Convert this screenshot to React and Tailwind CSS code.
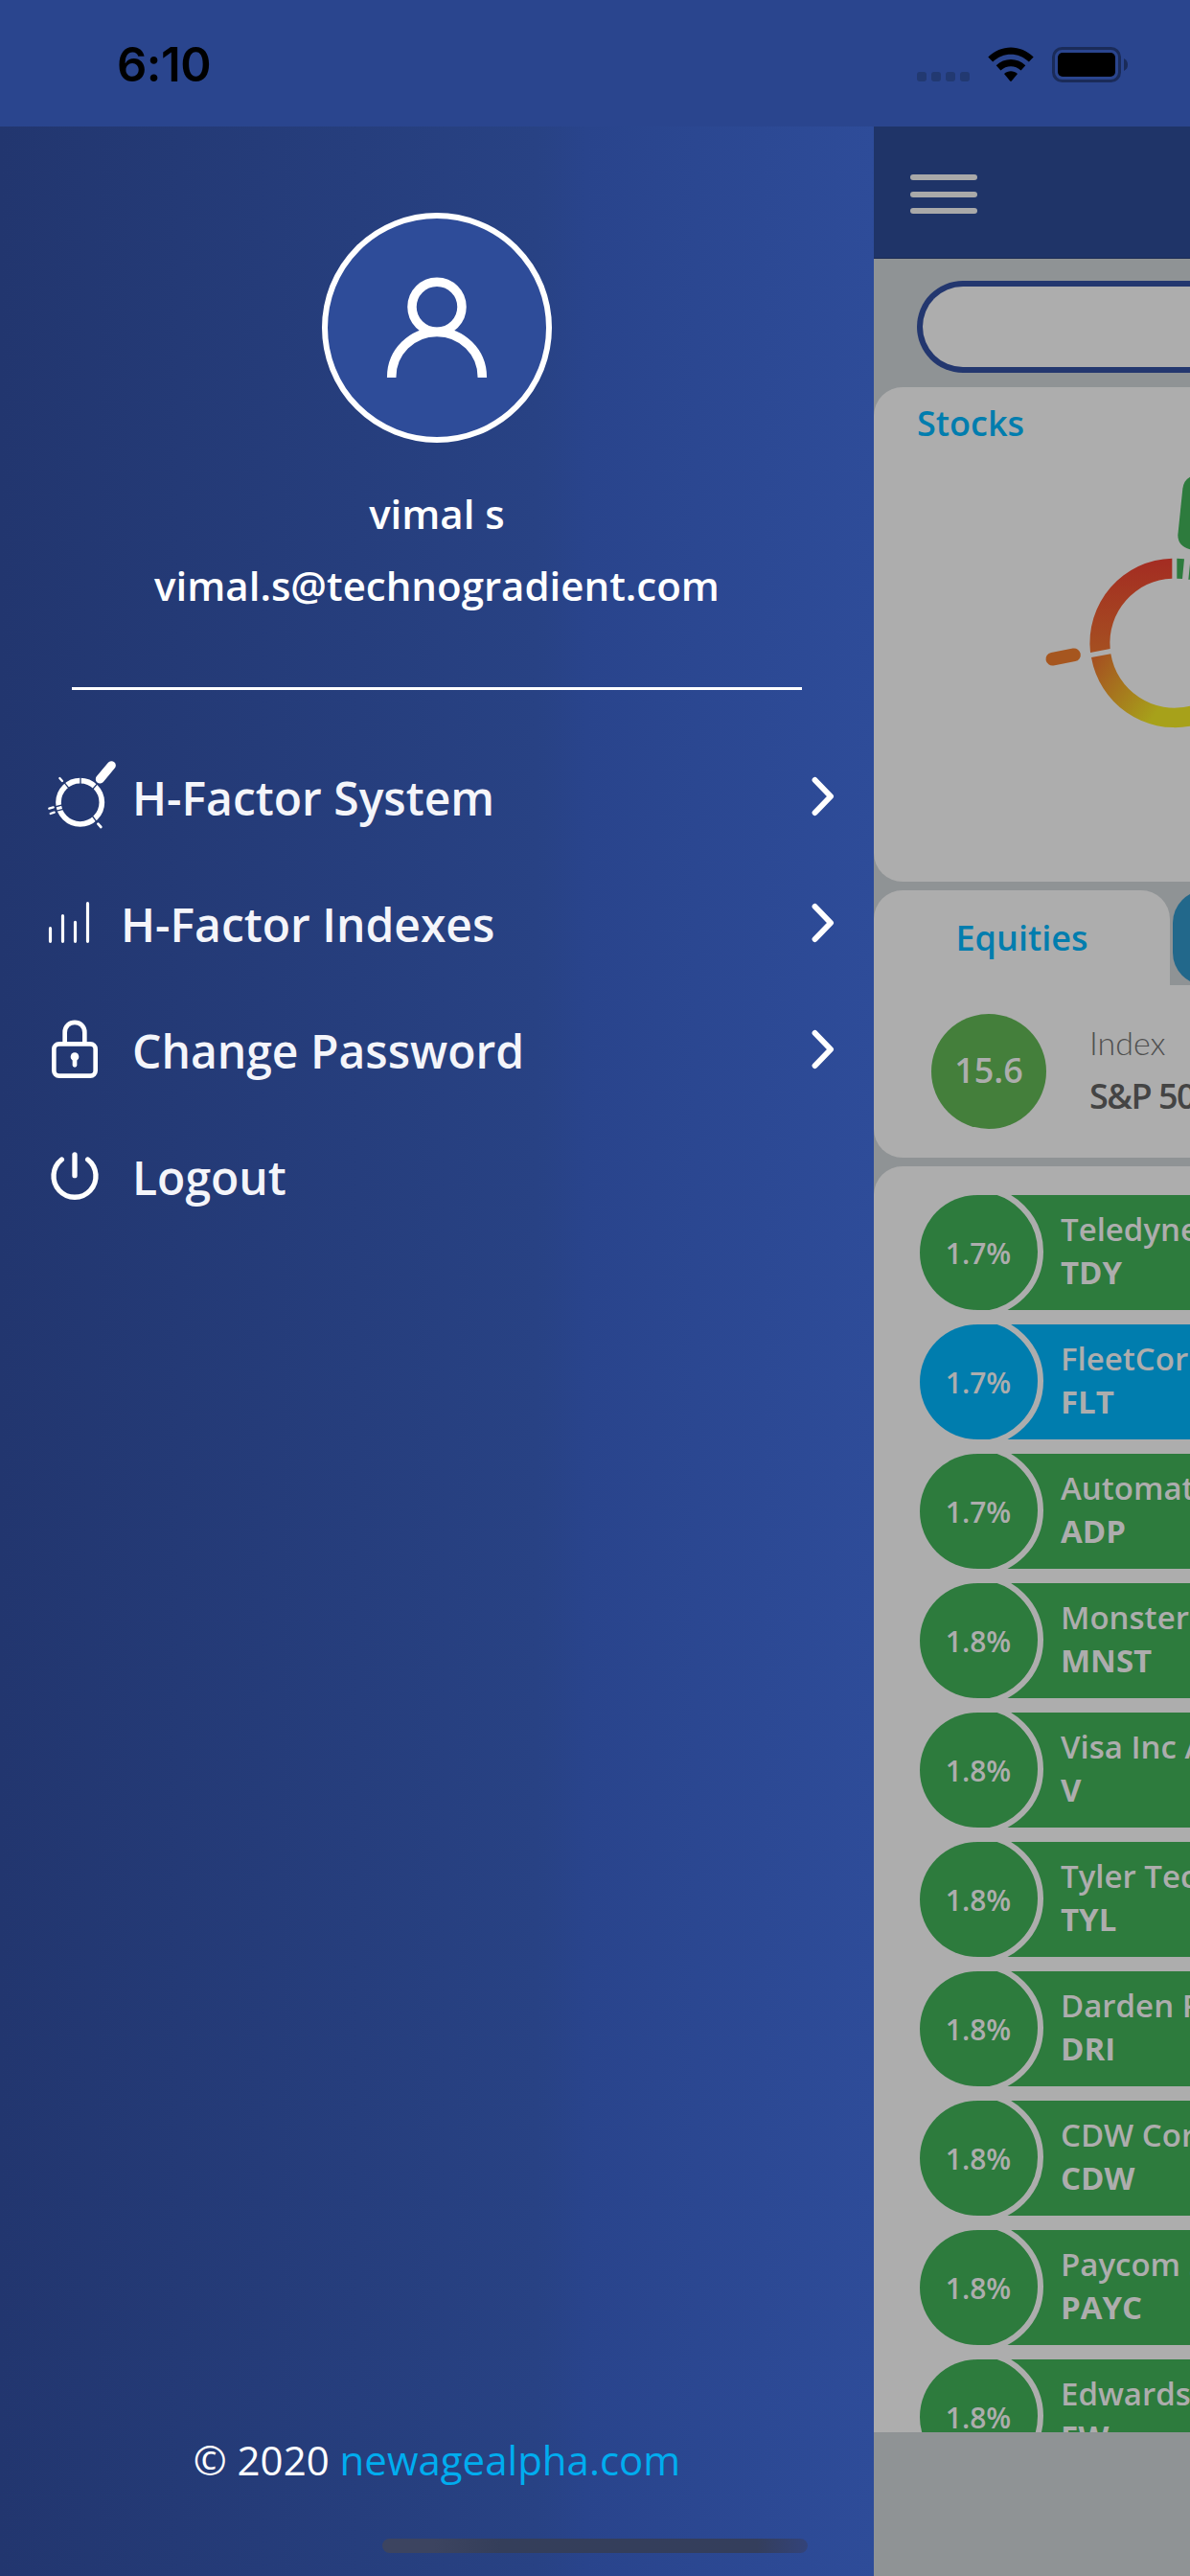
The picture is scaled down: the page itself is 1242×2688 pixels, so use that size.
const holdings = [
  { pct: "1.7%", name: "Teledyne Tech", ticker: "TDY" },
  { pct: "1.7%", name: "FleetCor Tech", ticker: "FLT", blue: true },
  { pct: "1.7%", name: "Automatic Data", ticker: "ADP" },
  { pct: "1.8%", name: "Monster Bev", ticker: "MNST" },
  { pct: "1.8%", name: "Visa Inc A", ticker: "V" },
  { pct: "1.8%", name: "Tyler Tech", ticker: "TYL" },
  { pct: "1.8%", name: "Darden Rest", ticker: "DRI" },
  { pct: "1.8%", name: "CDW Corp", ticker: "CDW" },
  { pct: "1.8%", name: "Paycom Soft", ticker: "PAYC" },
  { pct: "1.8%", name: "Edwards Life", ticker: "EW" },
];

function StatusBar() {
  return (
    <header className="flex h-[132px] shrink-0 items-start justify-between bg-[#2a458e] pl-[122px] pr-[64px] text-black">
      <span className="mt-[38px] font-['Inter'] text-[49px] font-semibold leading-[60px] tracking-[-0.5px]">6:10</span>
      <div className="mt-[48px] flex h-[38px] items-start">
        <div className="mr-[18px] mt-[27px] flex gap-[5px]">
          {[0, 1, 2, 3].map((i) => (
            <span key={i} className="h-[10px] w-[10px] rounded-[3px] bg-[#223971]" />
          ))}
        </div>
        <svg className="mr-[18px]" width="50" height="38" viewBox="0 0 50 38">
          <path d="M1.3 11.5C14.5 -2 35.500 -2 48.700 11.500L43.800 16.600C33.200 6 16.800 6 6.200 16.600Z" fill="black" />
          <path d="M9.700 20.200C18.300 11.800 31.700 11.800 40.300 20.200L35.600 25.600C29.500 19.800 20.500 19.800 14.400 25.600Z" fill="black" />
          <path d="M18 29C22 25.300 28 25.300 32 29L25.800 36.600Q25 37.500 24.200 36.600Z" fill="black" />
        </svg>
        <svg width="80" height="38" viewBox="0 0 80 38">
          <rect x="1.500" y="2.500" width="69" height="34" rx="9" fill="none" stroke="#1a2b59" strokeWidth="3" />
          <rect x="6" y="7" width="60" height="25" rx="5" fill="black" />
          <path d="M75 13Q79 15 79 19.500T75 26Z" fill="#1a2b59" />
        </svg>
      </div>
    </header>
  );
}

function PersonIcon() {
  return (
    <svg width="108" height="108" viewBox="0 0 108 108" fill="none" stroke="white" strokeWidth="9.500">
      <circle cx="54" cy="32.300" r="26" />
      <path d="M6.700 106V105.500C6.700 79.400 27.900 58.500 54 58.500S101.300 79.400 101.300 105.500V106" />
    </svg>
  );
}

function GaugeIcon() {
  return (
    <svg className="mb-[6px]" width="74" height="74" viewBox="54 66 222 222" fill="none" stroke="white">
      <circle cx="161" cy="202" r="68" strokeWidth="17" />
      <g stroke="#24396f" strokeWidth="4">
        <path d="M162 122V148" />
        <path d="M109 137L128 160" />
        <path d="M216 142L196 165" />
        <path d="M197 242L216 267" />
        <path d="M82 216L108 209" />
        <path d="M82 230L108 223" />
      </g>
      <g strokeLinecap="round">
        <path d="M223 129L259 86" strokeWidth="27" />
        <path d="M97 126L105 135" strokeWidth="7" />
        <path d="M217 269L226 279" strokeWidth="8" />
        <path d="M64 221L77 217" strokeWidth="7" />
        <path d="M68 237L80 233" strokeWidth="7" />
      </g>
    </svg>
  );
}

function BarsIcon() {
  return (
    <svg className="mb-[4px] ml-[2px]" width="44" height="44" viewBox="60 510 132 132" fill="none" stroke="white" strokeWidth="9.500" strokeLinecap="round">
      <path d="M67.500 596V637M106.500 557V637M145.500 577V637M184.500 518V637" />
    </svg>
  );
}

function LockIcon() {
  return (
    <svg className="mb-[2px] ml-[4px]" width="52" height="66" viewBox="66 96 156 198" fill="none" stroke="white">
      <rect x="79" y="178" width="130" height="100" rx="16" strokeWidth="14" />
      <path d="M113 176V142C113 100 175 100 175 142V176" strokeWidth="14" />
      <circle cx="144" cy="218" r="13" fill="white" stroke="none" />
      <path d="M144 222V244" strokeWidth="14" strokeLinecap="round" />
    </svg>
  );
}

function PowerIcon() {
  return (
    <svg className="mb-[4px] ml-[4px]" width="52" height="52" viewBox="66 510 156 156" fill="none" stroke="white" strokeWidth="16" strokeLinecap="round">
      <path d="M144 525V590" />
      <path d="M103 540A66 66 0 1 0 185 540" />
    </svg>
  );
}

function Chevron() {
  return (
    <svg className="mb-[2px] mr-[41px]" width="24" height="42" viewBox="0 0 24 42" fill="none" stroke="white" strokeWidth="6" strokeLinecap="round" strokeLinejoin="round">
      <path d="M3.600 4L20 21L3.600 38" />
    </svg>
  );
}

function MenuItem({ icon, label, narrow, arrow }) {
  return (
    <li className="flex h-[132px] items-center pl-[48px]">
      <span className={narrow ? "flex w-[78px] shrink-0" : "flex w-[90px] shrink-0"}>{icon}</span>
      <span className="flex-1 whitespace-nowrap pt-[2px] text-[48px] font-semibold leading-[64px] text-[#f4f5fa]">{label}</span>
      {arrow && <Chevron />}
    </li>
  );
}

function Sidebar() {
  return (
    <aside className="flex w-[912px] shrink-0 flex-col bg-[linear-gradient(90deg,#22366f_0px,#284284_560px,#29448c_612px,#2e4c99_912px)] text-white">
      <div className="mt-[90px] flex flex-col items-center">
        <div className="flex h-[240px] w-[240px] items-center justify-center rounded-full border-[6px] border-white bg-[#2e4c99]">
          <PersonIcon />
        </div>
        <div className="mt-[36px] text-center text-[42px] font-semibold leading-[75px]">
          <p>vimal s</p>
          <p>vimal.s@technogradient.com</p>
        </div>
        <div className="mt-[69px] h-[3px] w-[762px] bg-white" />
      </div>
      <ul className="mt-[46px] flex-1">
        <MenuItem icon={<GaugeIcon />} label="H-Factor System" arrow />
        <MenuItem icon={<BarsIcon />} label="H-Factor Indexes" narrow arrow />
        <MenuItem icon={<LockIcon />} label="Change Password" arrow />
        <MenuItem icon={<PowerIcon />} label="Logout" />
      </ul>
      <footer className="mb-[91px] text-center text-[42px] leading-[60px]">
        © 2020 <span className="text-[#00adef]">newagealpha.com</span>
      </footer>
    </aside>
  );
}

function Wheel() {
  return (
    <svg className="ml-[148px] block" width="182" height="300" viewBox="0 0 546 900">
      <defs>
        <linearGradient id="hot" x1="0" y1="310" x2="0" y2="600" gradientUnits="userSpaceOnUse">
          <stop offset="0" stopColor="#a42c22" />
          <stop offset="1" stopColor="#a54f21" />
        </linearGradient>
        <linearGradient id="warm" x1="240" y1="620" x2="450" y2="780" gradientUnits="userSpaceOnUse">
          <stop offset="0" stopColor="#a54f21" />
          <stop offset="1" stopColor="#a7a11a" />
        </linearGradient>
      </defs>
      <path d="M490 308A265 265 0 0 0 234 603L296 591A202 202 0 0 1 490 371Z" fill="url(#hot)" />
      <path d="M237 618A265 265 0 0 0 546 833V770A202 202 0 0 1 298 607Z" fill="url(#warm)" />
      <path d="M505 308L528 310L522 372L505 371Z" fill="#2d7b3d" />
      <path d="M546 325V374H541Z" fill="#2d7b3d" />
      <path d="M523 90Q526 64 546 53V280Q508 270 508 235Z" fill="#2d7b3d" />
      <path d="M115 623L183 610" stroke="#a6561f" strokeWidth="41" strokeLinecap="round" />
    </svg>
  );
}

function Holding({ pct, name, ticker, blue }) {
  const fill = blue ? "bg-[#007dae]" : "bg-[#2d7b3d]";
  return (
    <li className={`flex h-[120px] shrink-0 items-center overflow-hidden rounded-l-[60px] ${fill}`}>
      <div className="-ml-[7px] mb-[2px] flex h-[136px] w-[136px] shrink-0 items-center justify-center rounded-full border-[6px] border-[#adadad] pt-[2px] text-[30px] font-semibold">
        {pct}
      </div>
      <div className="mb-[5px] ml-[18px] whitespace-nowrap text-[33px] leading-[45px]">
        <p className="font-semibold">{name}</p>
        <p className="font-bold">{ticker}</p>
      </div>
    </li>
  );
}

function Dashboard() {
  return (
    <main className="flex w-[330px] flex-col overflow-hidden bg-[#8f9395]">
      <div className="flex h-[138px] shrink-0 flex-col gap-[11.500px] border-b border-[#1a2a52] bg-[#1f3468] pl-[38px] pt-[50px]">
        <span className="h-[6px] w-[70px] rounded-full bg-[#a9a9a9]" />
        <span className="h-[6px] w-[70px] rounded-full bg-[#a9a9a9]" />
        <span className="h-[6px] w-[70px] rounded-full bg-[#a9a9a9]" />
      </div>
      <div className="ml-[45px] mt-[23px] h-[96px] shrink-0 rounded-l-full border-[6px] border-r-0 border-[#23376f] bg-[#adadad]" />
      <section className="mt-[15px] h-[516px] shrink-0 rounded-l-[30px] bg-[#adadad] pt-[13px]">
        <h2 className="mb-[13px] pl-[45px] text-[36px] font-semibold leading-[50px] text-[#007dae]">Stocks</h2>
        <Wheel />
      </section>
      <section className="mt-[9px] shrink-0">
        <div className="flex h-[99px] gap-[3px]">
          <div className="flex w-[309px] shrink-0 items-center justify-center rounded-t-[30px] bg-[#adadad] text-[36px] font-semibold text-[#007dae]">Equities</div>
          <div className="w-[60px] shrink-0 rounded-l-[34px] bg-[#22688b]" />
        </div>
        <div className="flex h-[180px] items-center rounded-bl-[30px] bg-[#adadad] pl-[60px]">
          <div className="flex h-[120px] w-[120px] shrink-0 items-center justify-center rounded-full bg-[#447f3b] pb-[3px] text-[36px] font-semibold text-[#adadad]">15.6</div>
          <div className="mb-[4px] ml-[45px] whitespace-nowrap">
            <p className="font-['Lato'] text-[34px] font-light leading-[56px] text-[#505050]">Index</p>
            <p className="text-[36px] font-semibold leading-[56px] tracking-[-1.500px] text-[#444444]">S&amp;P 500</p>
          </div>
        </div>
      </section>
      <ul className="mt-[9px] flex h-[1321px] shrink-0 flex-col gap-[15px] overflow-hidden rounded-tl-[30px] bg-[#adadad] pl-[48px] pt-[30px] text-[#adadad]">
        {holdings.map((h) => (
          <Holding key={h.ticker} {...h} />
        ))}
      </ul>
    </main>
  );
}

export default function App() {
  return (
    <div className="relative flex h-[2688px] w-[1242px] flex-col overflow-hidden font-['Open_Sans',sans-serif]">
      <StatusBar />
      <div className="flex min-h-0 flex-1">
        <Sidebar />
        <Dashboard />
      </div>
      <div className="absolute bottom-[24px] left-[399px] h-[15px] w-[444px] rounded-full bg-[linear-gradient(90deg,#3c4460_0%,#3c4460_12%,#343e5a_28%,#343e5c_88%,#33437a_100%)]" />
    </div>
  );
}
